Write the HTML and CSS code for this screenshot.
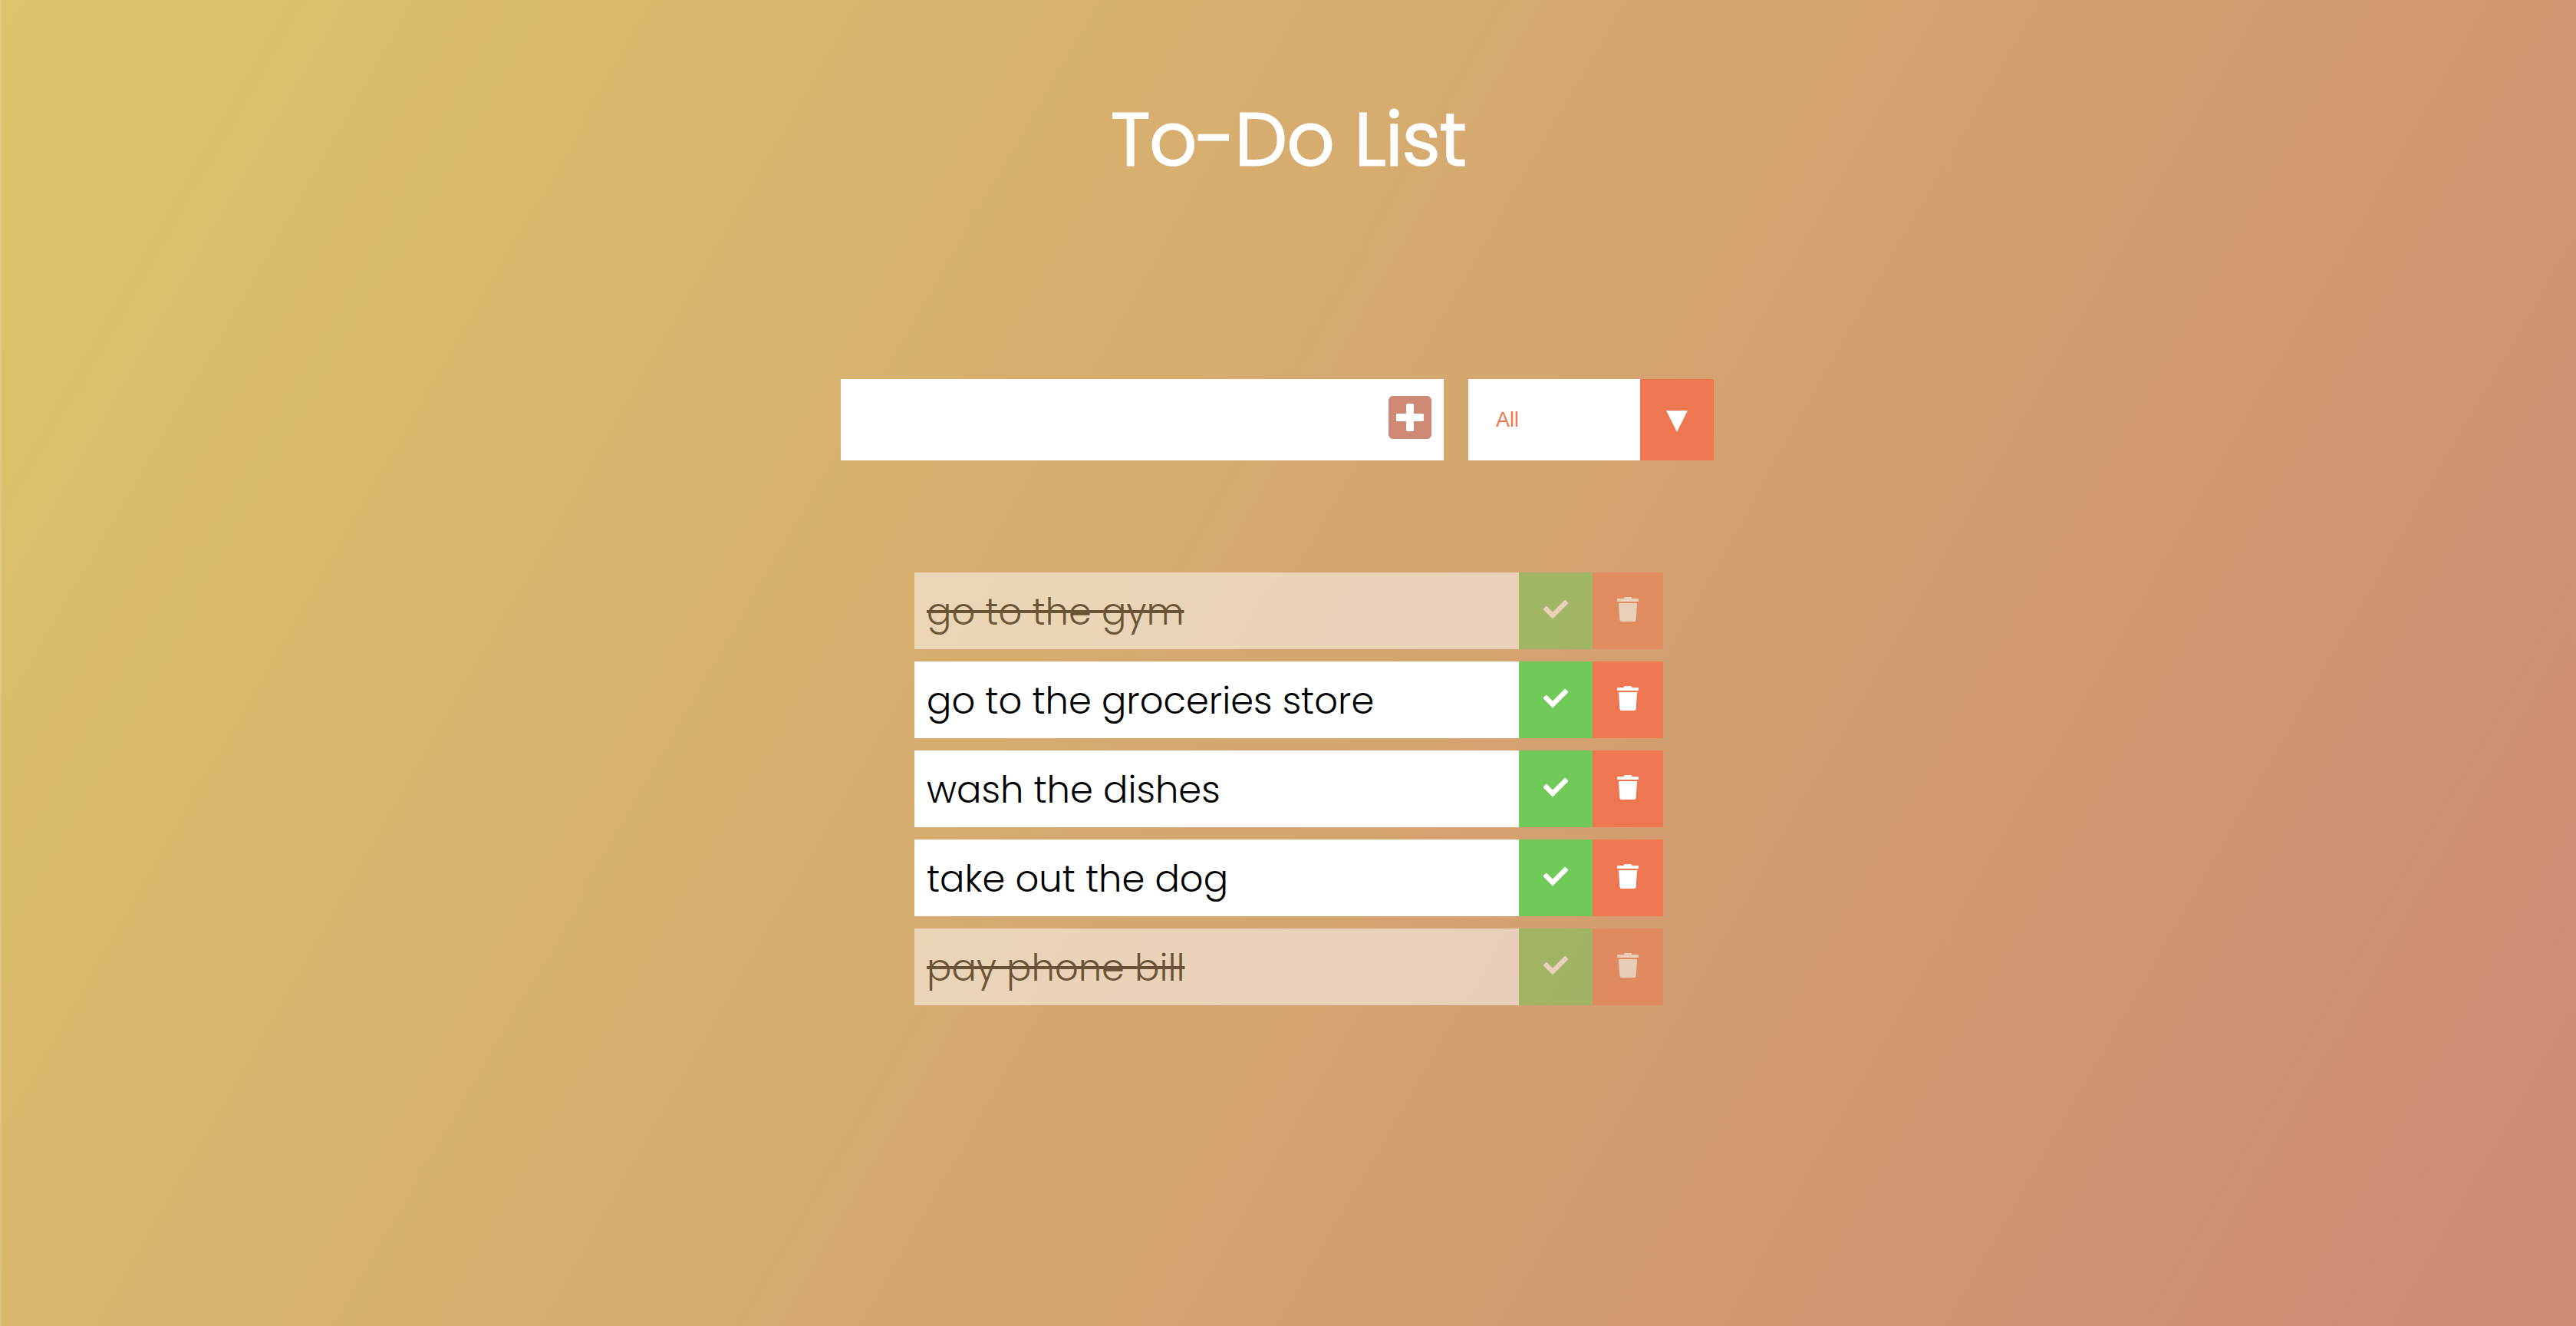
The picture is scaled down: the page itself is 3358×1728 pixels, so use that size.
FILE: index.html
```html
<!DOCTYPE html>
<html lang="en">
<head>
<meta charset="utf-8">
<meta name="viewport" content="width=device-width, initial-scale=1">
<title>To-Do List</title>
<link rel="stylesheet" href="styles.css">
</head>
<body>
<svg class="sprite" aria-hidden="true">
  <symbol id="check" viewBox="0 0 512 512"><path d="M173.898 439.404l-166.4-166.4c-9.997-9.997-9.997-26.206 0-36.204l36.203-36.204c9.997-9.998 26.207-9.998 36.204 0L192 312.69 432.095 72.596c9.997-9.997 26.207-9.997 36.204 0l36.203 36.204c9.997 9.997 9.997 26.206 0 36.204l-294.4 294.401c-9.998 9.997-26.207 9.997-36.204-.001z"/></symbol>
  <symbol id="trash" viewBox="0 0 448 512"><path d="M432 32H312l-9.400-18.700A24 24 0 0 0 281.100 0H166.800a23.720 23.720 0 0 0-21.400 13.300L136 32H16A16 16 0 0 0 0 48v32a16 16 0 0 0 16 16h416a16 16 0 0 0 16-16V48a16 16 0 0 0-16-16zM32 128l21.200 339a48 48 0 0 0 47.900 45h245.800a48 48 0 0 0 47.900-45L416 128z"/></symbol>
</svg>
<header class="header"><h1 class="title">To-Do List</h1></header>
<main>
  <form class="form">
    <div class="entry">
      <input class="entry-input" type="text" aria-label="New task">
      <button class="entry-add" type="submit" aria-label="Add task">
        <svg viewBox="0 0 448 448"><path d="M400 0H48C21.500 0 0 21.500 0 48v352c0 26.500 21.500 48 48 48h352c26.500 0 48-21.500 48-48V48c0-26.500-21.500-48-48-48zm-32 252c0 6.600-5.400 12-12 12h-92v92c0 6.600-5.400 12-12 12h-56c-6.600 0-12-5.400-12-12v-92H92c-6.600 0-12-5.400-12-12v-56c0-6.600 5.400-12 12-12h92V92c0-6.600 5.400-12 12-12h56c6.600 0 12 5.400 12 12v92h92c6.600 0 12 5.400 12 12v56z"/></svg>
      </button>
    </div>
    <div class="filter">
      <select class="filter-select" aria-label="Filter tasks">
        <option>All</option>
        <option>Completed</option>
        <option>Uncompleted</option>
      </select>
      <span class="filter-arrow"><svg viewBox="0 0 28 28"><path d="M0 0h28L14 28z"/></svg></span>
    </div>
  </form>
  <ul class="list">
    <li class="todo done"><span class="todo-text">go to the gym</span><button class="check" aria-label="Complete"><svg><use href="#check"/></svg></button><button class="trash" aria-label="Delete"><svg><use href="#trash"/></svg></button></li>
    <li class="todo"><span class="todo-text">go to the groceries store</span><button class="check" aria-label="Complete"><svg><use href="#check"/></svg></button><button class="trash" aria-label="Delete"><svg><use href="#trash"/></svg></button></li>
    <li class="todo"><span class="todo-text">wash the dishes</span><button class="check" aria-label="Complete"><svg><use href="#check"/></svg></button><button class="trash" aria-label="Delete"><svg><use href="#trash"/></svg></button></li>
    <li class="todo"><span class="todo-text">take out the dog</span><button class="check" aria-label="Complete"><svg><use href="#check"/></svg></button><button class="trash" aria-label="Delete"><svg><use href="#trash"/></svg></button></li>
    <li class="todo done"><span class="todo-text">pay phone bill</span><button class="check" aria-label="Complete"><svg><use href="#check"/></svg></button><button class="trash" aria-label="Delete"><svg><use href="#trash"/></svg></button></li>
  </ul>
</main>
</body>
</html>
```
FILE: styles.css
```css
* { box-sizing: border-box; margin: 0; padding: 0; }

body {
  min-height: 100vh;
  border-left: 2px solid rgba(255, 255, 255, 0.15);
  background: linear-gradient(120deg, #dcc56b, #cd8974) border-box;
  font-family: "Poppins", "Inter", sans-serif;
  font-weight: 300;
  color: #fff;
}

button, input, select { border: 0; border-radius: 0; font: inherit; }
svg { display: block; fill: currentColor; }
.sprite { display: none; }

.header {
  padding: 110px 16px 240px;
  text-align: center;
}
.title {
  font-size: 96px;
  font-weight: 300;
  line-height: 144px;
  -webkit-text-stroke: 3px currentColor;
}

.form {
  display: flex;
  justify-content: center;
  gap: 32px;
  padding-right: 30px;
}
.entry {
  display: flex;
  align-items: center;
  width: 786px;
  height: 106px;
  padding-right: 16px;
  background: #fff;
}
.entry-input {
  flex: 1;
  min-width: 0;
  height: 100%;
  padding: 16px;
  background: none;
  font-size: 48px;
}
.entry-add {
  height: 62px;
  padding-bottom: 6px;
  background: none;
  color: #cd8974;
  cursor: pointer;
}
.entry-add svg { width: 56px; height: 56px; }

.filter {
  display: flex;
  position: relative;
  width: 320px;
  height: 106px;
}
.filter-select {
  width: 100%;
  padding: 0 128px 0 36px;
  appearance: none;
  background: #fff;
  color: #ee7752;
  font: 27px "Liberation Sans", Arial, sans-serif;
  cursor: pointer;
}
.filter-arrow {
  position: absolute;
  inset: 0 0 0 auto;
  display: grid;
  place-items: center;
  width: 96px;
  padding-top: 4px;
  background: #ee7752;
  pointer-events: none;
}
.filter-arrow svg { width: 28px; height: 28px; }

.list {
  display: flex;
  flex-direction: column;
  gap: 16px;
  width: 976px;
  margin: 146px auto 0;
  list-style: none;
}
.todo {
  display: flex;
  height: 100px;
  background: #fff;
  color: #000;
}
.todo-text {
  flex: 1;
  padding: 4px 16px 0;
  font-size: 48px;
  line-height: 96px;
  white-space: nowrap;
}
.check, .trash {
  display: grid;
  place-items: center;
  padding-bottom: 4px;
  color: #fff;
  cursor: pointer;
}
.check { width: 96px; background: #70c959; }
.trash { width: 92px; background: #ee7752; }
.check svg { width: 32px; height: 32px; }
.trash svg { width: 28px; height: 32px; }

.done { opacity: 0.5; }
.done .todo-text { text-decoration: line-through 4px; }
```
